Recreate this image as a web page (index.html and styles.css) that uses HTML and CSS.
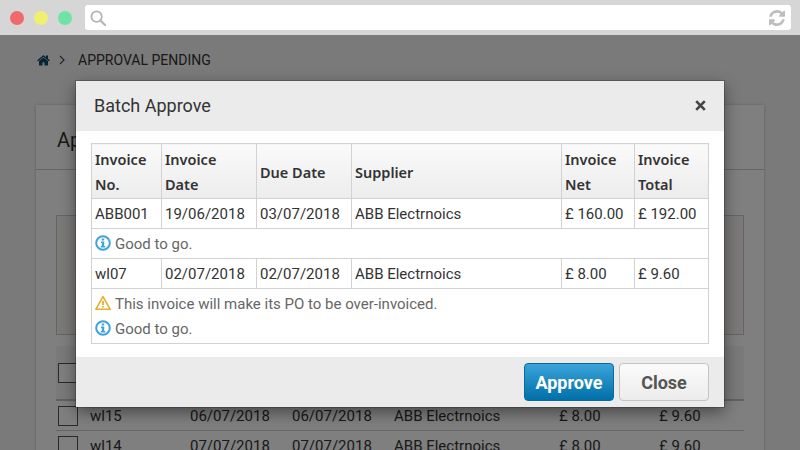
FILE: index.html
```html
<!DOCTYPE html>
<html lang="en">
<head>
<meta charset="utf-8">
<title>Batch Approve</title>
<link rel="stylesheet" href="styles.css">
</head>
<body>
<header class="chrome">
  <span class="dot dot-red"></span><span class="dot dot-yellow"></span><span class="dot dot-green"></span>
  <div class="address">
    <svg class="search" viewBox="0 0 16 16" width="16" height="16"><circle cx="6.6" cy="6.6" r="5.2" fill="none" stroke="#b4b4b4" stroke-width="1.8"/><path d="M10.5 10.5 15 15" stroke="#b4b4b4" stroke-width="2.2" stroke-linecap="round"/></svg>
    <svg class="reload" viewBox="0 0 1536 1536" width="16" height="16"><path fill="#bdbdbd" d="M1511 928q0 5-1 7-64 268-268 434.500T764 1536q-146 0-282.500-55T238 1324l-129 129q-19 19-45 19t-45-19-19-45V960q0-26 19-45t45-19h448q26 0 45 19t19 45-19 45l-137 137q71 66 161 102t187 36q134 0 250-65t186-179q11-17 53-117 8-23 30-23h192q13 0 22.500 9.500t9.500 22.500zm25-800v448q0 26-19 45t-45 19h-448q-26 0-45-19t-19-45 19-45l138-138Q969 256 768 256q-134 0-250 65T332 500q-11 17-53 117-8 23-30 23H50q-13 0-22.500-9.500T18 608v-7q65-268 270-434.500T768 0q146 0 284 55.500T1297 212l130-129q19-19 45-19t45 19 19 45z"/></svg>
  </div>
</header>
<main class="page">
  <nav class="crumbs">
    <svg class="home" viewBox="0 0 1664 1312" width="13" height="11"><path fill="#0a4a6b" d="M1408 736v480q0 26-19 45t-45 19H960V896H704v384H320q-26 0-45-19t-19-45V736q0-1 .5-3t.5-3l575-474 575 474q1 2 1 6zm223-69-62 74q-8 9-21 11h-3q-13 0-21-7L832 162 140 745q-12 8-24 7-13-2-21-11l-62-74q-8-10-7-23.500T37 622L756 23q32-26 76-26t76 26l244 204V32q0-14 9-23t23-9h192q14 0 23 9t9 23v408l219 182q10 8 11 21.500t-7 23.500z"/></svg>
    <svg class="chev" viewBox="0 0 6 10" width="6" height="10"><path d="M1 1l4 4-4 4" fill="none" stroke="#4c4c4c" stroke-width="1.2"/></svg>
    <span>APPROVAL PENDING</span>
  </nav>
  <section class="card">
    <h2 class="card-title">Approval Pending</h2>
    <div class="filter"></div>
    <div class="list-head"><span class="box"></span></div>
    <div class="list-row"><span class="box"></span><span class="c1">wl15</span><span class="c2">06/07/2018</span><span class="c3">06/07/2018</span><span class="c4">ABB Electrnoics</span><span class="c5">£ 8.00</span><span class="c6">£ 9.60</span></div>
    <div class="list-row"><span class="box"></span><span class="c1">wl14</span><span class="c2">07/07/2018</span><span class="c3">07/07/2018</span><span class="c4">ABB Electrnoics</span><span class="c5">£ 8.00</span><span class="c6">£ 9.60</span></div>
  </section>
</main>
<div class="overlay"></div>
<div class="modal">
  <div class="modal-head">
    <h3>Batch Approve</h3>
    <svg class="close-x" viewBox="0 0 11 11" width="11" height="11"><path d="M1.2 1.2l8.6 8.6M9.800 1.200l-8.600 8.600" stroke="#444" stroke-width="2.600"/></svg>
  </div>
  <div class="modal-body">
    <table>
      <colgroup><col class="w1"><col class="w2"><col class="w3"><col class="w4"><col class="w5"><col class="w6"></colgroup>
      <thead>
        <tr><th>Invoice No.</th><th>Invoice Date</th><th>Due Date</th><th>Supplier</th><th>Invoice Net</th><th>Invoice Total</th></tr>
      </thead>
      <tbody>
        <tr><td>ABB001</td><td>19/06/2018</td><td>03/07/2018</td><td>ABB Electrnoics</td><td>£ 160.00</td><td>£ 192.00</td></tr>
        <tr><td colspan="6" class="msgs">
          <p><svg class="ic" viewBox="0 0 16 16" width="16" height="16"><circle cx="8" cy="8" r="6.800" fill="none" stroke="#3ea3dc" stroke-width="2"/><path fill="#3ea3dc" d="M6.800 3.500h2.400v2H6.800zM6 6.600h3.200v4.400h1v1.500H5.800V11h1V8.100H6z"/></svg>Good to go.</p>
        </td></tr>
        <tr><td>wl07</td><td>02/07/2018</td><td>02/07/2018</td><td>ABB Electrnoics</td><td>£ 8.00</td><td>£ 9.60</td></tr>
        <tr><td colspan="6" class="msgs">
          <p><svg class="ic" viewBox="0 0 16 16" width="16" height="16"><path d="M8 1.600 15.200 14.300H.8z" fill="none" stroke="#e6ae2a" stroke-width="1.600" stroke-linejoin="round"/><path d="M8 5.800v4.300M8 11v1.600" stroke="#e6ae2a" stroke-width="1.800"/></svg>This invoice will make its PO to be over-invoiced.</p>
          <p><svg class="ic" viewBox="0 0 16 16" width="16" height="16"><circle cx="8" cy="8" r="6.800" fill="none" stroke="#3ea3dc" stroke-width="2"/><path fill="#3ea3dc" d="M6.800 3.500h2.400v2H6.800zM6 6.600h3.200v4.400h1v1.500H5.800V11h1V8.100H6z"/></svg>Good to go.</p>
        </td></tr>
      </tbody>
    </table>
  </div>
  <div class="modal-foot">
    <button class="btn btn-primary">Approve</button>
    <button class="btn btn-default">Close</button>
  </div>
</div>
</body>
</html>
```
FILE: styles.css
```css
* { box-sizing: border-box; }
html, body { margin: 0; padding: 0; }
body { width: 800px; height: 450px; overflow: hidden; position: relative; background: #f4f4f4; font-family: Roboto, sans-serif; color: #333; }
.chrome { height: 35px; background: #d6d6d6; display: flex; align-items: center; padding-left: 10px; position: relative; z-index: 3; }
.dot { width: 14px; height: 14px; border-radius: 50%; margin-right: 10px; }
.dot-red { background: #ef6a6a; }
.dot-yellow { background: #f0f06f; }
.dot-green { background: #6fe3a3; }
.address { width: 706px; height: 25px; margin-left: 3px; background: #fff; border-radius: 3px; display: flex; align-items: center; justify-content: space-between; padding: 0 6px 0 5px; }
.page { padding: 0 36px; }
.crumbs { height: 70px; padding-bottom: 20px; display: flex; align-items: center; font-size: 14px; color: #333; }
.home { margin: 0 9px 0 1px; }
.chev { margin-right: 13px; }
.card { background: #fff; height: 360px; box-shadow: 0 0 3px rgba(0,0,0,.2); }
.card-title { margin: 0; height: 65px; padding: 23px 21px 0; font-size: 20px; font-weight: 400; border-bottom: 1px solid #ccc; white-space: nowrap; overflow: hidden; }
.filter { margin: 45px 20px 0 20px; height: 120px; border: 1px solid #ccc; background: #f9f5f1; }
.list-head { height: 55px; margin: 11px 20px 0 20px; padding: 17px 0 0 2px; border-bottom: 2px solid #c4c4c4; background: #f4f4f4; }
.list-row { height: 30px; margin: 0 20px; display: flex; align-items: center; padding-left: 2px; border-bottom: 1px solid #ccc; font-size: 15px; }
.box { width: 20px; height: 20px; flex: none; display: block; border: 1.500px solid #555; background: #fff; }
.c1 { width: 100px; margin-left: 12px; }
.c2 { width: 102px; }
.c3 { width: 102px; }
.c4 { width: 165px; }
.c5 { width: 100px; }
.overlay { position: absolute; inset: 0; background: rgba(0,0,0,.5); z-index: 1; }
.modal { position: absolute; left: 76px; top: 81px; width: 648px; height: 326px; background: #fff; z-index: 2; box-shadow: 0 0 0 1px rgba(0,0,0,.2), 0 5px 15px rgba(0,0,0,.45); display: flex; flex-direction: column; }
.modal-head { height: 50px; flex: none; background: #ebebeb; display: flex; align-items: center; justify-content: space-between; padding: 0 18px 2px 18px; }
.modal-head h3 { margin: 0; font-size: 18px; font-weight: 400; color: #333; }
.close-x { display: block; }
.modal-body { flex: 1; padding: 12px 15px 0; }
table { border-collapse: collapse; width: 617px; table-layout: fixed; font-size: 15px; color: #333; }
.w1 { width: 70px; } .w2 { width: 95px; } .w3 { width: 95px; } .w4 { width: 210px; } .w5 { width: 73px; } .w6 { width: 74px; }
th, td { border: 1px solid #d2d2d2; padding: 0 3px; }
th { height: 55px; padding-top: 2px; text-align: left; font-family: "Noto Sans", sans-serif; font-weight: 600; font-size: 14.500px; line-height: 25px; background: linear-gradient(#fafafa, #ececec); color: #333; }
td { height: 30px; white-space: nowrap; }
.msgs { color: #666; padding: 2px 3px; }
.msgs p { margin: 0; height: 25px; display: flex; align-items: center; gap: 4px; }
.ic { flex: none; margin-top: -2px; }
.modal-foot { height: 50px; flex: none; background: #ebebeb; display: flex; align-items: center; justify-content: flex-end; gap: 5px; padding: 0 15px 0 0; }
.btn { height: 38px; border-radius: 4px; font-family: Roboto, sans-serif; font-size: 18px; font-weight: 700; padding: 0; }
.btn-primary { width: 90px; color: #fff; border: 1px solid #0a6a9c; background: linear-gradient(#3aa3da, #0070a8); }
.btn-default { width: 90px; color: #555; border: 1px solid #c4c4c4; background: linear-gradient(#fbfbfb, #ececec); }
```
